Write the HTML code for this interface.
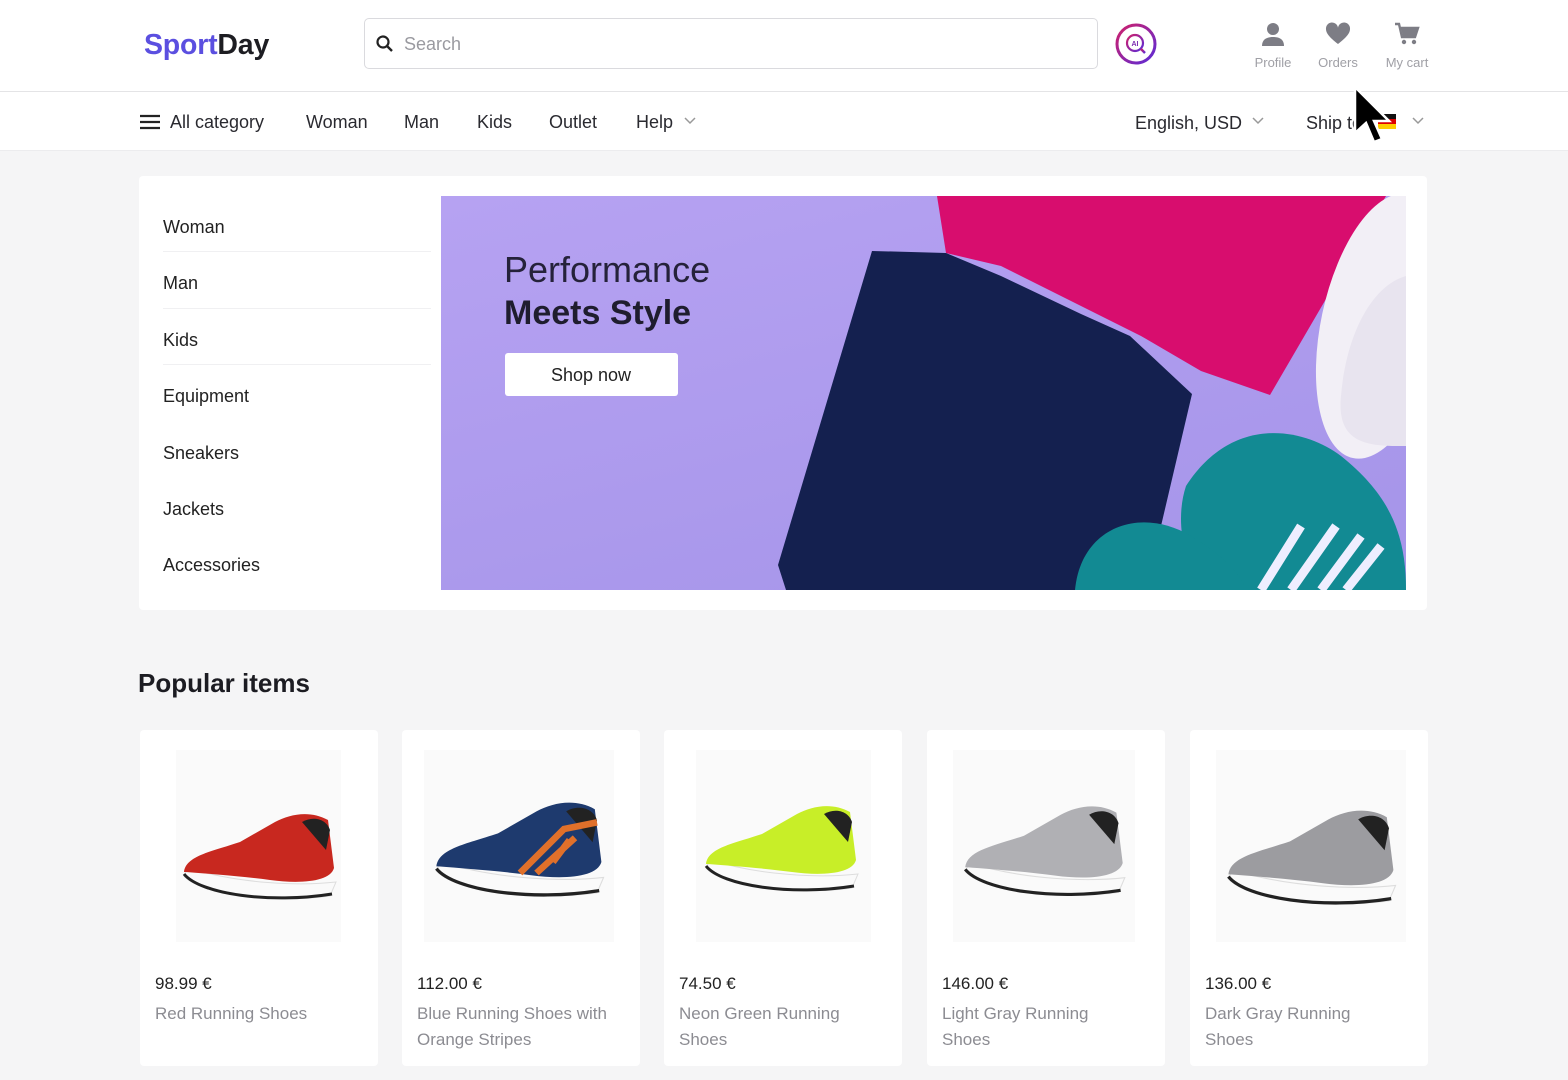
<!DOCTYPE html>
<html><head><meta charset="utf-8"><style>
*{margin:0;padding:0;box-sizing:border-box}
body{width:1568px;height:1080px;overflow:hidden;background:#f5f5f6;font-family:"Liberation Sans",sans-serif;color:#1f1f24;position:relative}
.abs{position:absolute}
header{position:absolute;left:0;top:0;width:1568px;height:92px;background:#fff;border-bottom:1px solid #e4e4e6}
nav{position:absolute;left:0;top:92px;width:1568px;height:59px;background:#fff;border-bottom:1px solid #ececee}
.logo{left:144px;top:29px;font-size:28.5px;font-weight:bold;letter-spacing:-0.2px}
.search{left:364px;top:18px;width:734px;height:51px;border:1px solid #dadade;border-radius:5px}
.search span{position:absolute;left:39px;top:15px;font-size:18px;color:#9a9aa0}
.ic{text-align:center;font-size:13px;color:#a0a0a6;width:60px}
.nv{top:112px;font-size:18px;color:#2a2a30}
.card{background:#fff;border-radius:4px}
.side{left:163px;font-size:18px;color:#222}
.sline{left:163px;width:268px;height:1px;background:#f0f0f2}
.prod{top:730px;width:238px;height:336px}
.pimg{position:absolute;left:36px;top:20px;width:165px;height:192px;background:#fafafa}
.price{position:absolute;left:15px;top:244px;font-size:17px;color:#222}
.pname{position:absolute;left:15px;top:271px;font-size:17px;color:#8c8c92;line-height:26px;width:200px}
</style></head><body>
<header>
<div class="abs logo"><span style="color:#5b4fe0">Sport</span><span style="color:#1d1d22">Day</span></div>
<div class="abs search"><svg class="abs" style="left:10px;top:15px" width="20" height="20" viewBox="0 0 20 20"><circle cx="8" cy="8" r="5.5" fill="none" stroke="#222" stroke-width="2.2"/><path d="M12 12l5 5" stroke="#222" stroke-width="2.4"/></svg><span>Search</span></div>
<svg class="abs" style="left:1114px;top:22px" width="44" height="44" viewBox="0 0 44 44"><defs><linearGradient id="g" x1="0" y1="0" x2="1" y2="1"><stop offset="0" stop-color="#d0206a"/><stop offset="1" stop-color="#5b2bd8"/></linearGradient></defs><circle cx="22" cy="22" r="19" fill="none" stroke="url(#g)" stroke-width="3"/><circle cx="21" cy="21" r="8" fill="none" stroke="url(#g)" stroke-width="2.2"/><path d="M27 27l4 4" stroke="url(#g)" stroke-width="2.5"/><text x="21" y="24" font-size="7" font-weight="bold" text-anchor="middle" fill="#7a2ab0" font-family="Liberation Sans">AI</text></svg>
<div class="abs ic" style="left:1243px;top:22px"><svg width="26" height="24" viewBox="0 0 26 24"><circle cx="13" cy="7" r="6" fill="#7d7d85"/><path d="M2 24c0-7 5-9 11-9s11 2 11 9z" fill="#7d7d85"/></svg><div style="margin-top:6px">Profile</div></div>
<div class="abs ic" style="left:1308px;top:22px"><svg width="26" height="24" viewBox="0 0 26 24"><path d="M13 22C4 15 1 11 1 7a6 6 0 0 1 12-1 6 6 0 0 1 12 1c0 4-3 8-12 15z" fill="#7d7d85"/></svg><div style="margin-top:6px">Orders</div></div>
<div class="abs ic" style="left:1377px;top:22px"><svg width="26" height="24" viewBox="0 0 26 24"><path d="M1 2h4l3 13h13l3-9H7" fill="none" stroke="#7d7d85" stroke-width="2.4"/><path d="M7 6h17l-3 9H9z" fill="#7d7d85"/><circle cx="10" cy="20" r="2.2" fill="#7d7d85"/><circle cx="20" cy="20" r="2.2" fill="#7d7d85"/></svg><div style="margin-top:6px">My cart</div></div>
</header>
<nav></nav>
<svg class="abs" style="left:140px;top:114px" width="20" height="16"><path d="M0 2h20M0 8h20M0 14h20" stroke="#222" stroke-width="2.2"/></svg>
<div class="abs nv" style="left:170px">All category</div>
<div class="abs nv" style="left:306px">Woman</div>
<div class="abs nv" style="left:404px">Man</div>
<div class="abs nv" style="left:477px">Kids</div>
<div class="abs nv" style="left:549px">Outlet</div>
<div class="abs nv" style="left:636px">Help</div>
<svg class="abs" style="left:684px;top:117px" width="12" height="8"><path d="M1 1l5 5 5-5" fill="none" stroke="#999" stroke-width="1.5"/></svg>
<div class="abs nv" style="left:1135px;top:113px">English, USD</div>
<svg class="abs" style="left:1252px;top:117px" width="12" height="8"><path d="M1 1l5 5 5-5" fill="none" stroke="#999" stroke-width="1.5"/></svg>
<div class="abs nv" style="left:1306px;top:113px">Ship to</div>
<div class="abs" style="left:1378px;top:114px;width:18px;height:5px;background:#111"></div><div class="abs" style="left:1378px;top:119px;width:18px;height:5px;background:#d00"></div><div class="abs" style="left:1378px;top:124px;width:18px;height:5px;background:#fc0"></div>
<svg class="abs" style="left:1412px;top:117px" width="12" height="8"><path d="M1 1l5 5 5-5" fill="none" stroke="#999" stroke-width="1.5"/></svg>
<svg class="abs" style="left:1352px;top:84px" width="48" height="66"><path d="M3 3v46l11-10 8 19 8-3-8-18h15z" fill="#000" stroke="#fff" stroke-width="2.5"/></svg>

<div class="abs card" style="left:139px;top:176px;width:1288px;height:434px"></div>
<div class="abs side" style="top:217px">Woman</div><div class="abs sline" style="top:251px"></div>
<div class="abs side" style="top:273px">Man</div><div class="abs sline" style="top:308px"></div>
<div class="abs side" style="top:330px">Kids</div><div class="abs sline" style="top:364px"></div>
<div class="abs side" style="top:386px">Equipment</div>
<div class="abs side" style="top:443px">Sneakers</div>
<div class="abs side" style="top:499px">Jackets</div>
<div class="abs side" style="top:555px">Accessories</div>
<svg class="abs" style="left:441px;top:196px" width="965" height="394" viewBox="0 0 965 394">
<defs><linearGradient id="bg" x1="0" y1="0" x2="0.6" y2="1"><stop offset="0" stop-color="#b6a2f2"/><stop offset="1" stop-color="#a796ea"/></linearGradient></defs>
<rect width="965" height="394" fill="url(#bg)"/>
<path d="M496 0H945L829 199 760 175 700 140 640 110 560 70 505 57z" fill="#d80d6e"/>
<path d="M431 55 470 56 505 57 560 80 640 118 689 140 751 198 720 330 660 394H345L337 369z" fill="#14204f"/>
<ellipse cx="940" cy="130" rx="60" ry="135" fill="#f2eff6" transform="rotate(12 940 130)"/>
<path d="M965 80C930 90 905 140 900 200 895 250 930 250 965 250z" fill="#e8e4ef"/>
<path d="M745 290C790 220 860 230 900 260 950 300 965 340 965 394H760C740 360 735 320 745 290z" fill="#128a93"/>
<path d="M634 394C640 330 700 310 750 340 790 365 800 380 805 394z" fill="#128a93"/>
<path d="M820 394 860 330M850 394 895 330M880 394 920 340M905 394 940 350" stroke="#eef" stroke-width="9"/>
<text x="63" y="86" font-size="36" fill="#25223a" font-family="Liberation Sans">Performance</text>
<text x="63" y="128" font-size="34" font-weight="bold" fill="#1f1d2e" font-family="Liberation Sans">Meets Style</text>
<rect x="64" y="157" width="173" height="43" rx="3" fill="#fff"/>
<text x="150" y="185" font-size="18" fill="#222" text-anchor="middle" font-family="Liberation Sans">Shop now</text>
</svg>

<div class="abs" style="left:138px;top:668px;font-size:26px;font-weight:bold;color:#1c1c22">Popular items</div>

<svg width="0" height="0" style="position:absolute"><defs>
<g id="sole"><path d="M4 68C20 86 90 96 150 88L156 74C120 78 60 76 8 60z" fill="#fafafa" stroke="#ddd"/><path d="M4 66C20 86 90 96 152 86" fill="none" stroke="#222" stroke-width="3"/></g>
</defs></svg>

<div class="abs card prod" style="left:140px"><div class="pimg"><svg width="165" height="192" viewBox="0 0 165 192"><g transform="translate(4,58)"><use href="#sole"/><path d="M4 64C6 48 30 44 60 34L95 14C110 6 130 2 148 12L154 60C150 74 120 76 90 72 60 68 30 66 6 64z" fill="#c8281f"/><path d="M122 14c10-6 24-4 28 8l-4 20z" fill="#222"/></g></svg></div><div class="price">98.99 €</div><div class="pname">Red Running Shoes</div></div>
<div class="abs card prod" style="left:402px"><div class="pimg" style="left:22px;width:190px"><svg width="190" height="192" viewBox="0 0 190 192"><g transform="translate(8,46) scale(1.1)"><use href="#sole"/><path d="M4 64C6 48 30 44 60 34L95 14C110 6 130 2 148 12L154 60C150 74 120 76 90 72 60 68 30 66 6 64z" fill="#1e3a6e"/><path d="M122 14c10-6 24-4 28 8l-4 20z" fill="#222"/><path d="M80 70 120 30 150 24M95 70 130 38M110 60 125 40" stroke="#e0702a" stroke-width="6" fill="none"/></g></svg></div><div class="price">112.00 €</div><div class="pname">Blue Running Shoes with Orange Stripes</div></div>
<div class="abs card prod" style="left:664px"><div class="pimg" style="left:32px;width:175px"><svg width="175" height="192" viewBox="0 0 175 192"><g transform="translate(6,50)"><use href="#sole"/><path d="M4 64C6 48 30 44 60 34L95 14C110 6 130 2 148 12L154 60C150 74 120 76 90 72 60 68 30 66 6 64z" fill="#c8ee28"/><path d="M122 14c10-6 24-4 28 8l-4 20z" fill="#222"/></g></svg></div><div class="price">74.50 €</div><div class="pname" style="width:175px">Neon Green Running Shoes</div></div>
<div class="abs card prod" style="left:927px"><div class="pimg" style="left:26px;width:182px"><svg width="182" height="192" viewBox="0 0 182 192"><g transform="translate(8,50) scale(1.05)"><use href="#sole"/><path d="M4 64C6 48 30 44 60 34L95 14C110 6 130 2 148 12L154 60C150 74 120 76 90 72 60 68 30 66 6 64z" fill="#b0b0b4"/><path d="M122 14c10-6 24-4 28 8l-4 20z" fill="#222"/></g></svg></div><div class="price">146.00 €</div><div class="pname" style="width:165px">Light Gray Running Shoes</div></div>
<div class="abs card prod" style="left:1190px"><div class="pimg" style="left:26px;width:190px"><svg width="190" height="192" viewBox="0 0 190 192"><g transform="translate(8,54) scale(1.1)"><use href="#sole"/><path d="M4 64C6 48 30 44 60 34L95 14C110 6 130 2 148 12L154 60C150 74 120 76 90 72 60 68 30 66 6 64z" fill="#9c9ca0"/><path d="M122 14c10-6 24-4 28 8l-4 20z" fill="#222"/></g></svg></div><div class="price">136.00 €</div><div class="pname" style="width:165px">Dark Gray Running Shoes</div></div>
</body></html>
